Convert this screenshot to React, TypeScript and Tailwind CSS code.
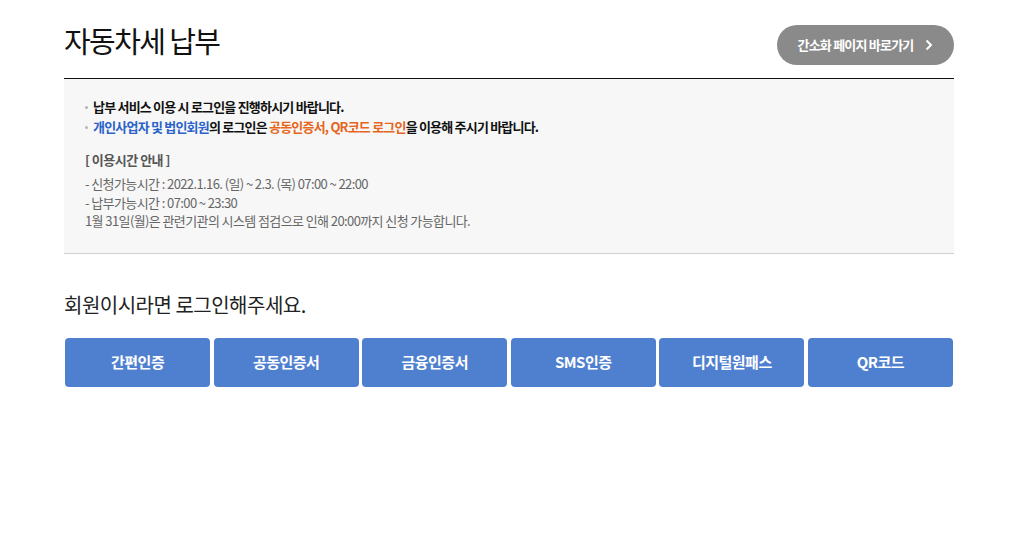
import React from "react";

const methods = ["간편인증", "공동인증서", "금융인증서", "SMS인증", "디지털원패스", "QR코드"];

function Dot() {
  return <span className="mt-[9px] mr-[5px] h-[3px] w-[3px] shrink-0 rounded-full bg-[#b5b5b5]" />;
}

export default function App() {
  return (
    <div
      className="min-h-[536px] bg-white text-[#111]"
      style={{ fontFamily: '"Noto Sans CJK KR", "Noto Sans", sans-serif' }}
    >
      <div className="ml-[64px] w-[890px] pt-[20px]">
        {/* header */}
        <div className="flex items-start justify-between h-[58px]">
          <h1 className="text-[29px] leading-[40px] font-normal tracking-[-1.6px] text-[#111]">
            자동차세 납부
          </h1>
          <button className="mt-[5px] h-[40px] w-[177px] rounded-full bg-[#8a8a8a] text-white text-[13px] font-bold flex items-center justify-center gap-[12px] tracking-[-0.8px]">
            간소화 페이지 바로가기
            <svg width="8" height="12" viewBox="0 0 8 12" fill="none">
              <path d="M1.5 1.5L6 6l-4.5 4.5" stroke="white" strokeWidth="2" />
            </svg>
          </button>
        </div>

        {/* notice */}
        <div className="border-t border-[#111] border-b border-b-[#cfcfcf] bg-[#f7f7f7] pl-[21px] pt-[18px] pb-[22px]">
          <ul className="text-[13px] font-bold leading-[20px] text-[#111] tracking-[-0.8px]">
            <li className="flex">
              <Dot />
              <span>납부 서비스 이용 시 로그인을 진행하시기 바랍니다.</span>
            </li>
            <li className="flex">
              <Dot />
              <span>
                <span className="text-[#2a63c9]">개인사업자 및 법인회원</span>의 로그인은{" "}
                <span className="text-[#e5661c]">공동인증서, QR코드 로그인</span>을 이용해 주시기 바랍니다.
              </span>
            </li>
          </ul>
          <p className="mt-[13px] text-[13px] font-bold text-[#555] leading-[20px] tracking-[-0.5px]">[ 이용시간 안내 ]</p>
          <div className="mt-[5px] text-[13px] text-[#666] leading-[18.5px] tracking-[-0.6px]">
            <p>- 신청가능시간 : 2022.1.16. (일) ~ 2.3. (목) 07:00 ~ 22:00</p>
            <p>- 납부가능시간 : 07:00 ~ 23:30</p>
            <p>1월 31일(월)은 관련기관의 시스템 점검으로 인해 20:00까지 신청 가능합니다.</p>
          </div>
        </div>

        {/* login */}
        <p className="mt-[37px] text-[20px] leading-[28px] text-[#222] tracking-[-0.5px]">
          회원이시라면 로그인해주세요.
        </p>
        <div className="mt-[19px] grid grid-cols-6 gap-[3.4px] px-[1px]">
          {methods.map((m) => (
            <button
              key={m}
              className="h-[49px] rounded-[4px] bg-[#4f80cf] text-white text-[15px] font-bold tracking-[-0.5px]"
            >
              {m}
            </button>
          ))}
        </div>
      </div>
    </div>
  );
}
